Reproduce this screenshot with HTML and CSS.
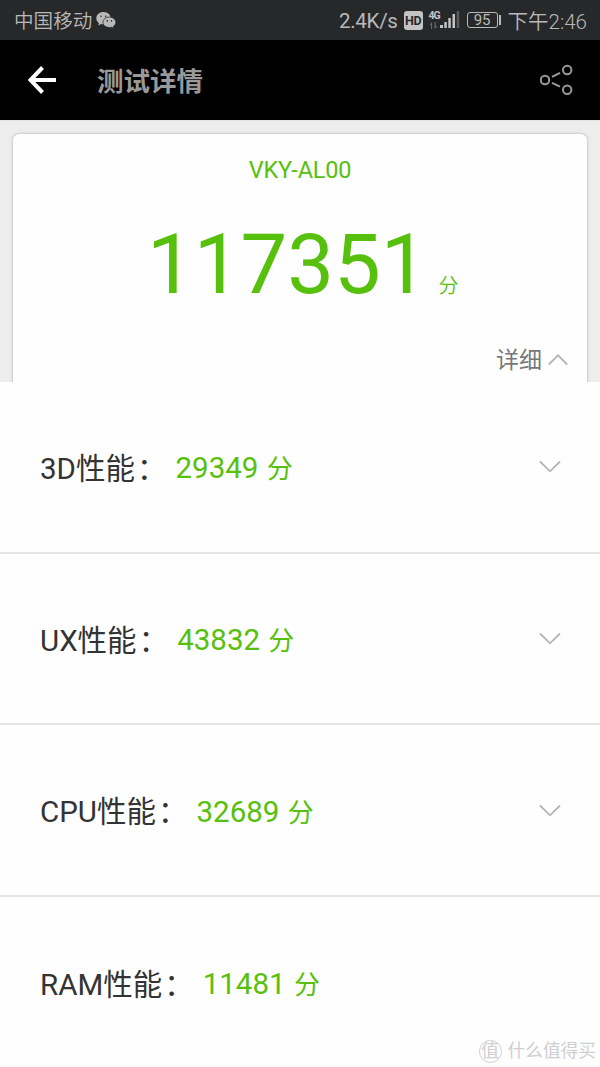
FILE: index.html
```html
<!DOCTYPE html>
<html lang="zh-CN">
    <head>
        <meta charset="utf-8">
        <link rel="stylesheet" href="styles.css">
        <title>测试详情</title>
    </head>
    <body>
        <div class="status">
            <span class="carrier">中国移动</span>
            <svg class="wechat" width="20" height="18" viewBox="0 0 20 18">
                <path fill="#b9b9b9" d="M7.500 1C3.600 1 .3 3.600.3 7.200c0 2 1 3.600 2.600 4.700L2.200 14.500l3-1.500c.8.2 1.500.3 2.300.3 4 0 7.200-2.700 7.200-6.100S11.500 1 7.500 1z"/>
                <path fill="#b9b9b9" stroke="#27282a" stroke-width=".8" d="M13.300 6.100c-3.600 0-6.400 2.300-6.400 5.200s2.800 5.200 6.400 5.200c.7 0 1.400-.1 2.100-.3l2.500 1.400-.6-2.200c1.500-1 2.500-2.400 2.500-4.100 0-2.900-2.900-5.200-6.500-5.200z"/>
                <g fill="#27282a">
                    <circle cx="5" cy="5.200" r=".8"/><circle cx="9.700" cy="5.200" r=".8"/>
                    <circle cx="11.300" cy="9.900" r=".8"/><circle cx="15.500" cy="9.900" r=".8"/>
                </g>
            </svg>
            <span class="speed">2.4K/s</span>
            <span class="hd">HD</span>
            <div class="signal">
                <div class="net">
                    <span class="net-type">4G</span>
                    <svg width="9" height="7" viewBox="0 0 9 7">
                        <path fill="#68696a" d="M2 7V3H.5L3 0v7zM5.500 0v7L8.500 4H6.700V0z"/>
                    </svg>
                </div>
                <svg width="20" height="18" viewBox="0 0 20 18">
                    <g fill="#c4c4c4">
                        <rect x="0" y="14" width="3" height="3"/>
                        <rect x="4.300" y="11" width="2.500" height="6"/>
                        <rect x="8.300" y="7" width="2.500" height="10"/>
                        <rect x="12.500" y="3" width="2.500" height="14"/>
                    </g>
                    <rect fill="#5a5b5c" x="16.700" y="0" width="2.500" height="17"/>
                </svg>
            </div>
            <span class="battery">95</span>
            <span class="battery-tip"></span>
            <span class="time">下午2:46</span>
        </div>

        <div class="header">
            <svg class="back" width="30" height="30" viewBox="0 0 30 30">
                <path fill="none" stroke="#fff" stroke-width="4" d="M29 15H4M15.500 2.500L3.500 15L15.500 27.500"/>
            </svg>
            <h1 class="title">测试详情</h1>
            <svg class="share" width="34" height="32" viewBox="0 0 34 32">
                <g fill="none" stroke="#999" stroke-width="2">
                    <circle cx="5" cy="16" r="4.200"/>
                    <circle cx="27.200" cy="6" r="4.200"/>
                    <circle cx="27.200" cy="25.700" r="4.200"/>
                    <path d="M12 12.800l8-4M12 18.900l8 3.800"/>
                </g>
            </svg>
        </div>

        <div class="summary">
            <div class="card">
                <div class="model">VKY-AL00</div>
                <div class="total">
                    <span class="score">117351</span>
                    <span class="unit">分</span>
                </div>
                <div class="detail">
                    <span>详细</span>
                    <svg width="20" height="12" viewBox="0 0 20 12">
                        <path fill="none" stroke="#b5b5b5" stroke-width="1.800" d="M.8 10.500L10 1.300L19.200 10.500"/>
                    </svg>
                </div>
            </div>
        </div>

        <div class="list">
            <div class="row">
                <span class="name">3D性能<span class="colon">：</span></span>
                <span class="value">29349 <span class="fen">分</span></span>
                <svg class="arrow" width="22" height="13" viewBox="0 0 22 13">
                    <path fill="none" stroke="#b5b5b5" stroke-width="1.800" d="M1 1.500L11 11.300L21 1.500"/>
                </svg>
            </div>
            <div class="row">
                <span class="name">UX性能<span class="colon">：</span></span>
                <span class="value">43832 <span class="fen">分</span></span>
                <svg class="arrow" width="22" height="13" viewBox="0 0 22 13">
                    <path fill="none" stroke="#b5b5b5" stroke-width="1.800" d="M1 1.500L11 11.300L21 1.500"/>
                </svg>
            </div>
            <div class="row">
                <span class="name">CPU性能<span class="colon">：</span></span>
                <span class="value">32689 <span class="fen">分</span></span>
                <svg class="arrow" width="22" height="13" viewBox="0 0 22 13">
                    <path fill="none" stroke="#b5b5b5" stroke-width="1.800" d="M1 1.500L11 11.300L21 1.500"/>
                </svg>
            </div>
            <div class="row">
                <span class="name">RAM性能<span class="colon">：</span></span>
                <span class="value">11481 <span class="fen">分</span></span>
            </div>
        </div>

        <div class="watermark">
            <span class="badge">值</span>
            <span>什么值得买</span>
        </div>
    </body>
</html>
```
FILE: styles.css
```css
* {
    box-sizing: border-box;
}
body {
    margin: 0;
    width: 600px;
    height: 1067px;
    overflow: hidden;
    background: #fefefe;
    font-family: Roboto, "Noto Sans CJK SC", sans-serif;
}
svg {
    display: block;
    flex: none;
}
.status {
    display: flex;
    align-items: center;
    height: 40px;
    padding: 0 13px 0 14px;
    background: #27282a;
    color: #b9b9b9;
    line-height: 38px;
    white-space: nowrap;
}
.carrier {
    padding-top: 4px;
    font-size: 19.6px;
    font-weight: 350;
}
.wechat {
    margin-left: 4px;
}
.speed {
    margin-left: auto;
    padding-top: 1px;
    font-size: 20.5px;
    letter-spacing: -0.3px;
}
.hd {
    width: 19px;
    height: 19px;
    margin-left: 6px;
    border-radius: 3px;
    background: #c4c4c4;
    color: #27282a;
    font-size: 12.5px;
    font-weight: bold;
    line-height: 19px;
    letter-spacing: -0.3px;
    text-align: center;
}
.signal {
    display: flex;
    align-items: flex-end;
    margin-left: 6px;
}
.net {
    display: flex;
    flex-direction: column;
    width: 11px;
    height: 18px;
}
.net-type {
    height: 11px;
    color: #c4c4c4;
    font-size: 10.5px;
    font-weight: bold;
    line-height: 10px;
    letter-spacing: -1px;
}
.battery {
    width: 31px;
    height: 16px;
    margin-left: 7px;
    border: 1px solid #b9b9b9;
    border-radius: 3px;
    font-size: 15px;
    line-height: 15px;
    text-align: center;
}
.battery-tip {
    width: 2px;
    height: 10px;
    margin-left: 1px;
    background: #b9b9b9;
}
.time {
    margin-left: 7px;
    padding-top: 3px;
    font-size: 20.5px;
    font-weight: 350;
}
.header {
    display: flex;
    align-items: center;
    height: 80px;
    padding: 0 26px 0 27px;
    background: #000;
}
.title {
    margin: 0 auto 0 40px;
    padding-top: 3px;
    color: #999;
    font-size: 26.5px;
    font-weight: bold;
    line-height: 77px;
}
.summary {
    height: 262px;
    padding: 13px 13px 0;
    border-top: 1px solid #e2e2e2;
    background: #ededed;
    overflow: hidden;
}
.card {
    height: 270px;
    border-radius: 6px;
    background: #fefefe;
    box-shadow: 0 0 3px rgba(0, 0, 0, 0.3);
    color: #57c00c;
}
.model {
    padding-top: 22px;
    font-size: 23.5px;
    line-height: 28px;
    letter-spacing: -0.2px;
    text-align: center;
}
.total {
    display: flex;
    align-items: baseline;
    height: 100px;
    margin-top: 31px;
    padding-left: 134px;
    line-height: 100px;
}
.score {
    font-size: 83.2px;
}
.unit {
    margin-left: 11px;
    padding-top: 1px;
    font-size: 20px;
    font-weight: 350;
}
.detail {
    display: flex;
    align-items: center;
    justify-content: flex-end;
    gap: 6px;
    height: 30px;
    margin-top: 30px;
    padding-right: 19px;
    color: #777;
    font-size: 23px;
    line-height: 30px;
}
.detail span {
    padding-top: 2px;
}
.row {
    display: flex;
    align-items: center;
    height: 171.7px;
    padding: 0 39px 0 40px;
    border-bottom: 2px solid #e4e4e4;
    color: #333;
    font-size: 29.5px;
    line-height: 40px;
}
.row:last-child {
    border-bottom: none;
}
.name,
.value {
    padding-top: 4px;
}
.colon {
    padding-left: 2px;
}
.value {
    margin-left: 9px;
    color: #57c00c;
}
.fen {
    margin-left: 1px;
    font-size: 26px;
}
.arrow {
    margin-left: auto;
}
/* sits over the last row */
.watermark {
    position: absolute;
    right: 4px;
    bottom: 3px;
    display: flex;
    align-items: center;
    gap: 6px;
    color: #cfcfcf;
    font-size: 17.7px;
    line-height: 26px;
}
.badge {
    width: 23px;
    height: 23px;
    border: 1px solid #cfcfcf;
    border-radius: 50%;
    line-height: 20px;
    text-align: center;
}
```
